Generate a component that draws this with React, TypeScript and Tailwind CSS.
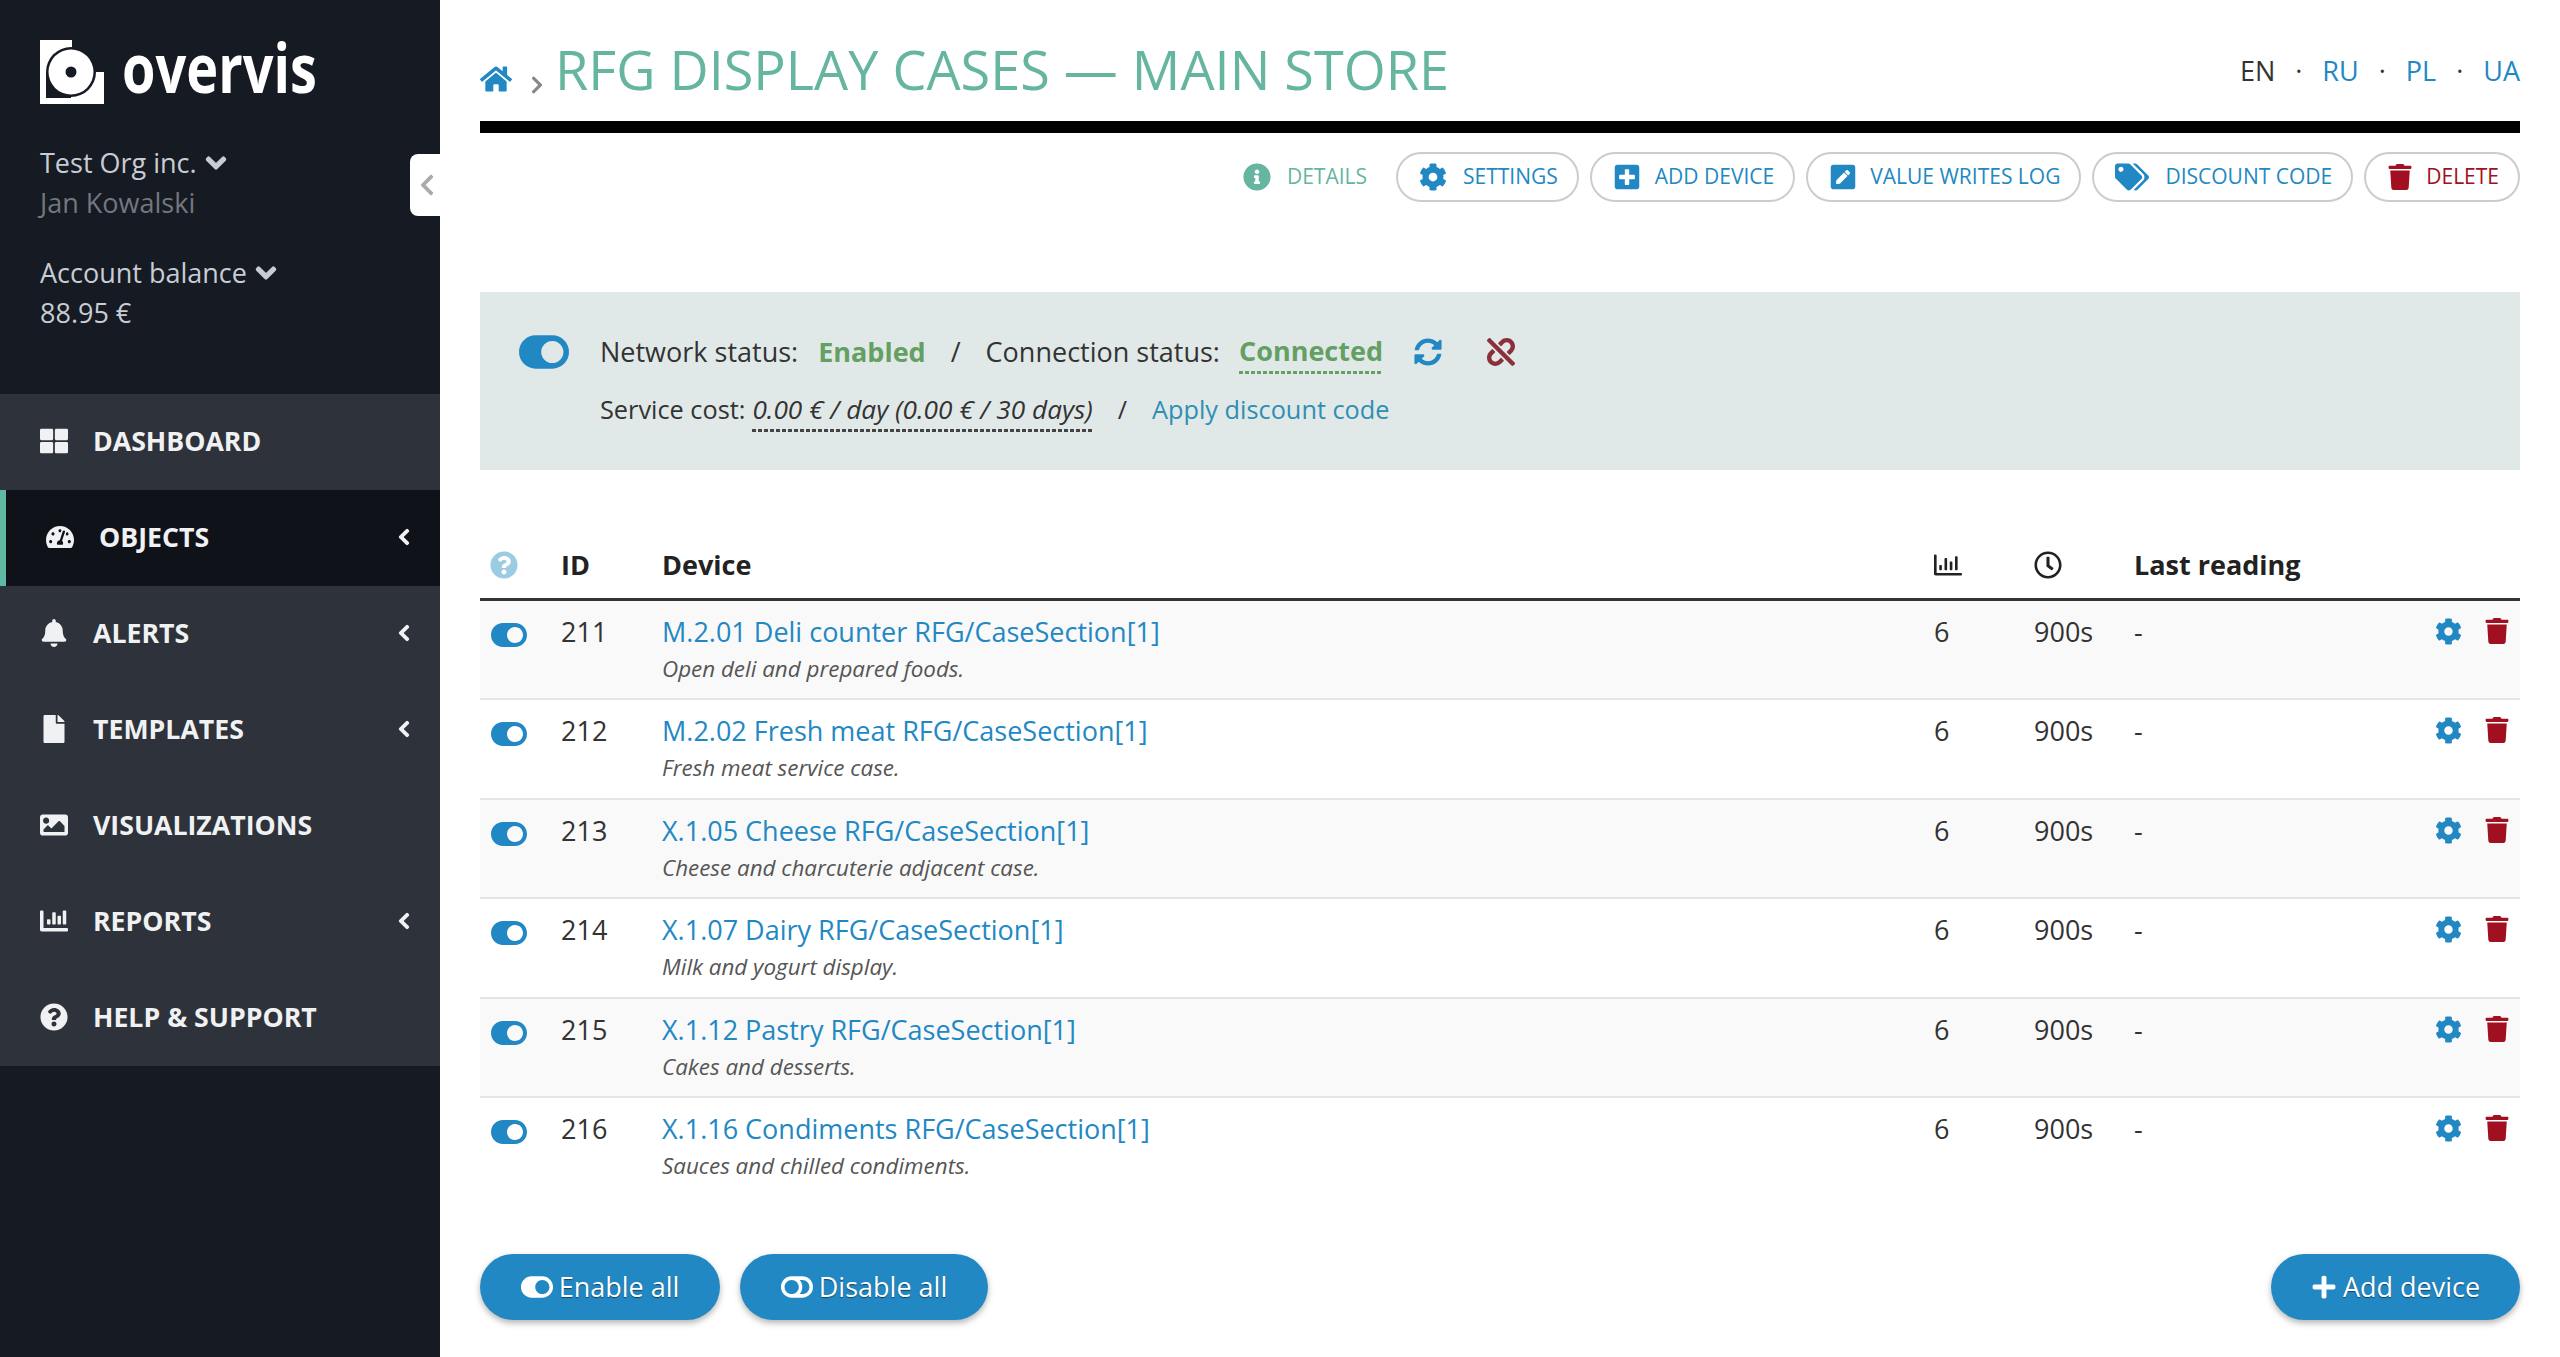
import React from "react";
import {
  FaThLarge, FaTachometerAlt, FaBell, FaFile, FaImage, FaChartBar, FaQuestionCircle, FaChevronLeft, FaChevronDown,
  FaHome, FaChevronRight, FaInfoCircle, FaCog, FaPlusSquare, FaPenSquare, FaTags, FaTrash, FaToggleOn, FaToggleOff,
  FaSyncAlt, FaUnlink, FaRegClock, FaPlus, FaRegChartBar,
} from "react-icons/fa";

const menu = [
  { label: "DASHBOARD", Icon: FaThLarge, arrow: false },
  { label: "OBJECTS", Icon: FaTachometerAlt, arrow: true, active: true },
  { label: "ALERTS", Icon: FaBell, arrow: true },
  { label: "TEMPLATES", Icon: FaFile, arrow: true },
  { label: "VISUALIZATIONS", Icon: FaImage, arrow: false },
  { label: "REPORTS", Icon: FaChartBar, arrow: true },
  { label: "HELP & SUPPORT", Icon: FaQuestionCircle, arrow: false },
];

const rows = [
  { id: 211, name: "M.2.01 Deli counter RFG/CaseSection[1]", desc: "Open deli and prepared foods." },
  { id: 212, name: "M.2.02 Fresh meat RFG/CaseSection[1]", desc: "Fresh meat service case." },
  { id: 213, name: "X.1.05 Cheese RFG/CaseSection[1]", desc: "Cheese and charcuterie adjacent case." },
  { id: 214, name: "X.1.07 Dairy RFG/CaseSection[1]", desc: "Milk and yogurt display." },
  { id: 215, name: "X.1.12 Pastry RFG/CaseSection[1]", desc: "Cakes and desserts." },
  { id: 216, name: "X.1.16 Condiments RFG/CaseSection[1]", desc: "Sauces and chilled condiments." },
];

function Logo() {
  return (
    <svg width="64" height="64" viewBox="0 0 64 64" className="shrink-0">
      <path d="M0 0H32V32H64V64H0Z" fill="#fff" />
      <circle cx="31" cy="32" r="25" fill="#161a22" />
      <rect x="6" y="32" width="25" height="26" fill="#161a22" />
      <circle cx="31" cy="32" r="22.5" fill="#fff" />
      <circle cx="31" cy="32" r="5.5" fill="#161a22" />
    </svg>
  );
}

function PillButton({ Icon, label, color, iconSize, gap }: { Icon: any; label: string; color: string; iconSize: string; gap: string }) {
  return (
    <button className={`flex h-[50px] items-center rounded-[25px] border-2 border-[#cccccc] bg-white pl-[21px] pr-[19px] text-[21px] ${gap} ${color}`}>
      <Icon className={iconSize} />
      <span>{label}</span>
    </button>
  );
}

function FooterButton({ Icon, label, width, iconSize }: { Icon: any; label: string; width: string; iconSize: string }) {
  return (
    <button className={`flex h-[66px] items-center justify-center gap-[6px] rounded-[33px] bg-[#2288c4] text-[27px] text-white shadow-[0_3px_6px_rgba(0,0,0,0.3)] [text-shadow:0_1px_1px_rgba(0,0,0,0.5)] ${width}`}>
      <Icon className={iconSize} />
      <span>{label}</span>
    </button>
  );
}

export default function App() {
  return (
    <div className="flex min-h-[1357px] bg-white font-['Open_Sans','Noto_Sans',sans-serif] text-[27px] text-[#333333]">
      <aside className="relative w-[440px] shrink-0 bg-[#161a22]">
        <div className="flex h-[394px] flex-col px-[40px] pt-[40px]">
          <div className="flex h-[64px] items-center">
            <Logo />
            <span className="ml-[18px] origin-left -translate-y-[5px] scale-x-[0.795] text-[68px] font-bold leading-[64px] text-white">overvis</span>
          </div>
          <div className="mt-[39px] flex h-[40px] items-center gap-[8px] leading-[40px] text-[#c8ccd4]">
            Test Org inc. <FaChevronDown className="text-[22px]" stroke="currentColor" strokeWidth={40} />
          </div>
          <div className="h-[40px] leading-[40px] text-[#73777f]">Jan Kowalski</div>
          <div className="mt-[30px] flex h-[40px] items-center gap-[8px] leading-[40px] text-[#c8ccd4]">
            Account balance <FaChevronDown className="text-[22px]" stroke="currentColor" strokeWidth={40} />
          </div>
          <div className="h-[40px] leading-[40px] text-[#c8ccd4]">88.95 €</div>
        </div>
        <button className="absolute right-0 top-[154px] flex h-[62px] w-[30px] items-center justify-end rounded-l-[8px] bg-white pr-[1px] text-[#aaaaaa]">
          <FaChevronLeft className="text-[24px]" />
        </button>
        <nav className="bg-[#2e323a]">
          {menu.map(({ label, Icon, arrow, active }) => (
            <div
              key={label}
              className={`flex h-[96px] items-center pb-[2px] pl-[40px] text-[26.7px] font-bold text-[#f0f1f3] ${active ? "border-l-[6px] border-[#5fb9a0] bg-[#0f1218]" : ""}`}
            >
              <span className="flex w-[28px] justify-center">
                <Icon className="shrink-0 text-[28px]" />
              </span>
              <span className="ml-[25px] flex-1">{label}</span>
              {arrow && <FaChevronLeft className="mr-[27px] text-[18px]" stroke="currentColor" strokeWidth={30} />}
            </div>
          ))}
        </nav>
      </aside>

      <main className="flex min-w-0 flex-1 flex-col px-[40px]">
        <header className="flex h-[121px] items-end pb-[22px]">
          <FaHome className="mb-[4px] text-[32px] text-[#2288c4]" />
          <FaChevronRight className="mb-[4px] ml-[15px] mr-[8px] text-[20px] text-[#888888]" />
          <h1 className="text-[54px] font-normal leading-[60px] text-[#66b5a0]">RFG DISPLAY CASES — MAIN STORE</h1>
          <div className="ml-auto flex items-center gap-[20px] self-center pt-[43px] text-[27px]">
            <span>EN</span>
            <span>·</span>
            <span className="text-[#2288c4]">RU</span>
            <span>·</span>
            <span className="text-[#2288c4]">PL</span>
            <span>·</span>
            <span className="text-[#2288c4]">UA</span>
          </div>
        </header>
        <div className="h-[12px] bg-black" />
        <div className="mt-[19px] flex items-center justify-end gap-[11px]">
          <div className="mr-[18px] flex items-center gap-[16px] text-[21px] text-[#66b5a0]">
            <FaInfoCircle className="text-[28px]" />
            DETAILS
          </div>
          <PillButton Icon={FaCog} label="SETTINGS" color="text-[#2288c4]" iconSize="text-[28px]" gap="gap-[16px]" />
          <PillButton Icon={FaPlusSquare} label="ADD DEVICE" color="text-[#2288c4]" iconSize="text-[28px]" gap="gap-[14px]" />
          <PillButton Icon={FaPenSquare} label="VALUE WRITES LOG" color="text-[#2288c4]" iconSize="text-[28px]" gap="gap-[13px]" />
          <PillButton Icon={FaTags} label="DISCOUNT CODE" color="text-[#2288c4]" iconSize="text-[34px]" gap="gap-[16px]" />
          <PillButton Icon={FaTrash} label="DELETE" color="text-[#a01020]" iconSize="text-[26px]" gap="gap-[13px]" />
        </div>

        <section className="mt-[90px] flex h-[178px] flex-col justify-center bg-[#e1e9e8] pl-[39px]">
          <div className="flex h-[58px] items-center">
            <FaToggleOn className="text-[50px] text-[#2288c4]" />
            <span className="ml-[31px]">Network status:</span>
            <b className="ml-[20px] font-bold text-[#649f63]">Enabled</b>
            <span className="ml-[25px]">/</span>
            <span className="ml-[25px]">Connection status:</span>
            <b className="ml-[19px] bg-[repeating-linear-gradient(90deg,#649f63_0_4px,transparent_4px_6px)] bg-[length:100%_3px] bg-bottom bg-no-repeat pb-[5px] pt-[2px] font-bold leading-[36px] text-[#649f63]">Connected</b>
            <FaSyncAlt className="ml-[31px] text-[28px] text-[#2288c4]" />
            <FaUnlink className="ml-[45px] text-[28px] text-[#8b2f3b]" />
          </div>
          <div className="flex h-[58px] items-center pl-[81px] text-[25.3px]">
            <span>Service cost:</span>
            <i className="ml-[7px] bg-[repeating-linear-gradient(90deg,#444444_0_4px,transparent_4px_6px)] bg-[length:100%_3px] bg-bottom bg-no-repeat pb-[5px] pt-[2px] text-[26.2px] leading-[36px]">0.00 € / day (0.00 € / 30 days)</i>
            <span className="ml-[25px]">/</span>
            <span className="ml-[25px] text-[#2f8fb3]">Apply discount code</span>
          </div>
        </section>

        <div className="mt-[71px] flex h-[60px] items-center border-b-[3px] border-[#333333] pb-[9px] font-semibold text-[#222222]">
          <span className="w-[81px] pl-[10px]">
            <FaQuestionCircle className="text-[28px] text-[#9ccbe4]" />
          </span>
          <span className="w-[101px] font-bold">ID</span>
          <span className="flex-1 font-bold">Device</span>
          <span className="w-[100px]">
            <FaRegChartBar className="text-[28px]" />
          </span>
          <span className="w-[100px]">
            <FaRegClock className="text-[28px]" />
          </span>
          <span className="w-[386px] font-bold">Last reading</span>
        </div>
        {rows.map((r, i) => (
          <div key={r.id} className={`flex h-[99.4px] ${i % 2 === 0 ? "bg-[#f9f9f9]" : "bg-white"} ${i < rows.length - 1 ? "border-b-2 border-[#e5e5e5]" : ""}`}>
            <span className="w-[81px] pl-[11px] pt-[16px]">
              <FaToggleOn className="text-[36px] text-[#2288c4]" />
            </span>
            <span className="w-[101px] pt-[12px] leading-[38px]">{r.id}</span>
            <div className="flex-1 pt-[12px]">
              <div className="leading-[38px] text-[#2288c4]">{r.name}</div>
              <div className="mt-[1px] text-[22.4px] italic leading-[34px] text-[#555555]">{r.desc}</div>
            </div>
            <span className="w-[100px] pt-[12px] leading-[38px]">6</span>
            <span className="w-[100px] pt-[12px] leading-[38px]">900s</span>
            <div className="flex w-[386px] pt-[12px]">
              <span className="flex-1 leading-[38px]">-</span>
              <FaCog className="mt-[5px] text-[27px] text-[#2288c4]" />
              <FaTrash className="ml-[22px] mr-[10px] mt-[5px] text-[26px] text-[#a01020]" />
            </div>
          </div>
        ))}
        <div className="mt-[57px] flex gap-[20px]">
          <FooterButton Icon={FaToggleOn} label="Enable all" width="w-[240px]" iconSize="text-[32px]" />
          <FooterButton Icon={FaToggleOff} label="Disable all" width="w-[248px]" iconSize="text-[32px]" />
          <div className="ml-auto">
            <FooterButton Icon={FaPlus} label="Add device" width="w-[249px]" iconSize="text-[26px]" />
          </div>
        </div>
      </main>
    </div>
  );
}
